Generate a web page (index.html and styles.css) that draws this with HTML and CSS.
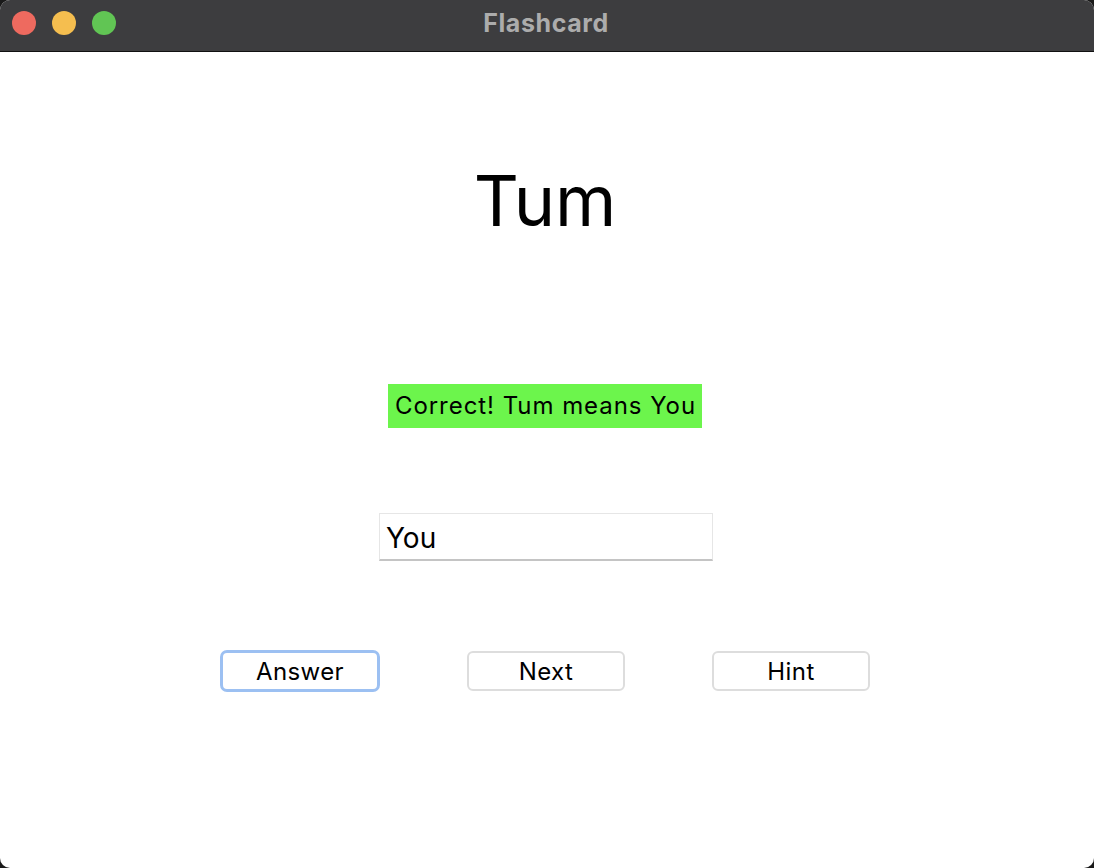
FILE: index.html
```html
<!DOCTYPE html>
<html>
<head>
<meta charset="utf-8">
<link rel="stylesheet" href="styles.css">
</head>
<body>
<div class="window">
  <div class="titlebar">
    <div class="lights">
      <span class="light red"></span>
      <span class="light yellow"></span>
      <span class="light green"></span>
    </div>
    <div class="title">Flashcard</div>
  </div>
  <div class="content">
    <div class="word">Tum</div>
    <div class="feedback">Correct! Tum means You</div>
    <div class="entry">You</div>
    <div class="buttons">
      <div class="btn focused">Answer</div>
      <div class="btn">Next</div>
      <div class="btn">Hint</div>
    </div>
  </div>
</div>
</body>
</html>
```

FILE: styles.css
```css
html, body {
  margin: 0;
  padding: 0;
  background: #1a1a1a;
}
body {
  width: 1094px;
  height: 868px;
  font-family: Inter, "Liberation Sans", Arial, sans-serif;
}
.window {
  width: 1094px;
  height: 868px;
  background: #ffffff;
  border-radius: 10px;
  overflow: hidden;
  display: flex;
  flex-direction: column;
}
.titlebar {
  height: 51px;
  background: #3d3d3f;
  border-bottom: 1px solid #111111;
  position: relative;
  display: flex;
  align-items: center;
  justify-content: center;
  flex-shrink: 0;
}
.lights {
  position: absolute;
  left: 12px;
  top: 11px;
  display: flex;
  gap: 16px;
}
.light {
  width: 24px;
  height: 24px;
  border-radius: 50%;
  display: block;
}
.red { background: #ee6a5f; }
.yellow { background: #f5be4f; }
.green { background: #61c554; }
.title {
  color: #acacac;
  font-weight: 700;
  font-size: 25px;
  letter-spacing: 0.6px;
  margin-top: -6px;
  margin-right: 2px;
}
.content {
  flex: 1;
  display: flex;
  flex-direction: column;
  align-items: center;
  padding-right: 4px;
}
.word {
  margin-top: 107px;
  font-size: 70px;
  line-height: 84px;
  color: #000;
}
.feedback {
  margin-top: 141px;
  background: #6cf54c;
  font-size: 24px;
  letter-spacing: 0.95px;
  height: 44px;
  line-height: 44px;
  padding: 0 6px 0 7px;
  color: #000;
}
.entry {
  margin-top: 85px;
  width: 326px;
  height: 45px;
  border: 1px solid #e6e6e6;
  border-bottom: 2px solid #c4c4c4;
  font-size: 28px;
  line-height: 48px;
  padding-left: 6px;
  margin-left: 2px;
  color: #000;
}
.buttons {
  margin-top: 89px;
  display: flex;
  gap: 87px;
  align-items: center;
}
.btn {
  width: 154px;
  height: 36px;
  border: 2px solid #dddddd;
  border-radius: 6px;
  font-size: 24px;
  letter-spacing: 0.4px;
  line-height: 37px;
  text-align: center;
  color: #000;
}
.btn.focused {
  border: 3px solid #9cc0f2;
  border-radius: 7px;
}
```
